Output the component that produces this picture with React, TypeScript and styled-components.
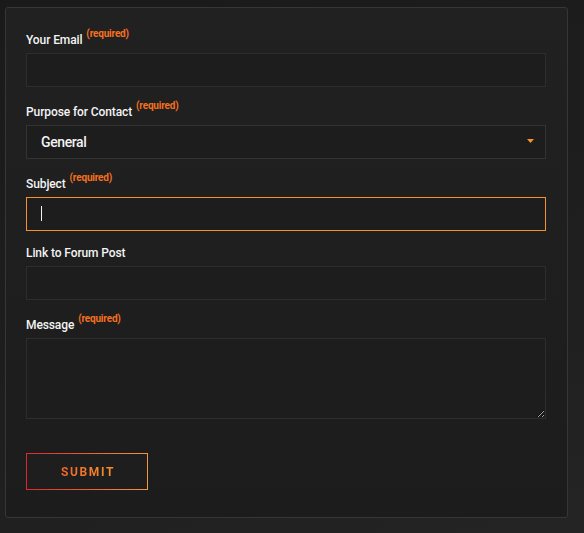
import React from "react";
import styled, { createGlobalStyle, css } from "styled-components";

const GlobalStyle = createGlobalStyle`
  html, body {
    margin: 0;
    height: 100%;
  }

  body {
    background: linear-gradient(160deg, #1a1a1a 0%, #1e1e1e 55%, #242424 100%);
    font-family: Roboto, "Liberation Sans", sans-serif;
  }
`;

const Page = styled.div`
  padding: 7px 0 0 5px;
`;

const Panel = styled.form`
  box-sizing: border-box;
  width: 563px;
  height: 511px;
  padding: 21px 21px 0 20px;
  border: 1px solid #363636;
  border-radius: 3px;
  background: linear-gradient(180deg, #212121 0%, #1e1e1e 60%, #1c1c1c 100%);
  display: flex;
  flex-direction: column;
`;

const Field = styled.div`
  display: flex;
  flex-direction: column;
  margin-bottom: 14px;
`;

const Label = styled.label<{ $required?: boolean }>`
  display: block;
  font-size: 12px;
  line-height: 16px;
  font-weight: 500;
  letter-spacing: -0.1px;
  color: #f4f4f4;
  margin-bottom: 5px;
  ${({ $required }) =>
    $required &&
    css`
      padding-top: 3px;
    `}
`;

const Required = styled.span`
  font-size: 10px;
  font-weight: 700;
  letter-spacing: -0.2px;
  color: #f5701f;
  vertical-align: 7px;
  line-height: 0;
  margin-left: 1px;
`;

const fieldBox = css`
  box-sizing: border-box;
  width: 520px;
  border: 1px solid #2d2d2d;
  background: #1d1d1d;
  color: #f2f2f2;
  font-family: Roboto, "Liberation Sans", sans-serif;
  font-size: 14px;
  font-weight: 500;
  letter-spacing: -0.4px;
  padding: 0 14px;
  outline: none;
  border-radius: 0;
`;

const InputWrap = styled.div`
  position: relative;
  width: 520px;
`;

const TextInput = styled.input<{ $focused?: boolean }>`
  ${fieldBox}
  display: block;
  height: 34px;
  caret-color: transparent;
  ${({ $focused }) =>
    $focused &&
    css`
      border-color: #f7922a;
    `}
`;

const Caret = styled.span`
  position: absolute;
  left: 15px;
  top: 9px;
  width: 1px;
  height: 15px;
  background: #f2f2f2;
`;

const Select = styled.select`
  ${fieldBox}
  display: block;
  height: 34px;
  appearance: none;
  border-color: #333333;
  cursor: pointer;
`;

const Arrow = styled.svg`
  position: absolute;
  right: 12px;
  top: 14px;
  width: 7px;
  height: 4px;
  pointer-events: none;
`;

const TextArea = styled.textarea`
  ${fieldBox}
  display: block;
  height: 81px;
  padding: 10px 14px;
  color-scheme: dark;
  resize: vertical;
`;

const SubmitButton = styled.button`
  align-self: flex-start;
  margin-top: 20px;
  box-sizing: border-box;
  width: 122px;
  height: 37px;
  padding: 0 0 0 2px;
  border: 1px solid transparent;
  background:
    linear-gradient(#1e1e1e, #1e1e1e) padding-box,
    linear-gradient(90deg, #e0262f 0%, #ec5f2e 50%, #f3963f 100%) border-box;
  cursor: pointer;
  font-family: Roboto, "Liberation Sans", sans-serif;
  font-size: 12px;
  font-weight: 700;
  letter-spacing: 1.6px;
`;

const SubmitText = styled.span`
  background: linear-gradient(90deg, #f0662a 0%, #f7922a 100%);
  -webkit-background-clip: text;
  background-clip: text;
  color: transparent;
`;

export default function App() {
  return (
    <>
      <GlobalStyle />
      <Page>
        <Panel onSubmit={(e) => e.preventDefault()}>
          <Field>
            <Label $required>
              Your Email <Required>(required)</Required>
            </Label>
            <TextInput type="email" />
          </Field>

          <Field>
            <Label $required>
              Purpose for Contact <Required>(required)</Required>
            </Label>
            <InputWrap>
              <Select defaultValue="general">
                <option value="general">General</option>
                <option value="bug">Bug Report</option>
                <option value="account">Account</option>
              </Select>
              <Arrow viewBox="0 0 7 4">
                <path d="M0 0H7L3.5 4Z" fill="#f7922a" />
              </Arrow>
            </InputWrap>
          </Field>

          <Field>
            <Label $required>
              Subject <Required>(required)</Required>
            </Label>
            <InputWrap>
              <TextInput type="text" $focused />
              <Caret />
            </InputWrap>
          </Field>

          <Field>
            <Label>Link to Forum Post</Label>
            <TextInput type="url" />
          </Field>

          <Field>
            <Label $required>
              Message <Required>(required)</Required>
            </Label>
            <TextArea />
          </Field>

          <SubmitButton type="submit">
            <SubmitText>SUBMIT</SubmitText>
          </SubmitButton>
        </Panel>
      </Page>
    </>
  );
}
